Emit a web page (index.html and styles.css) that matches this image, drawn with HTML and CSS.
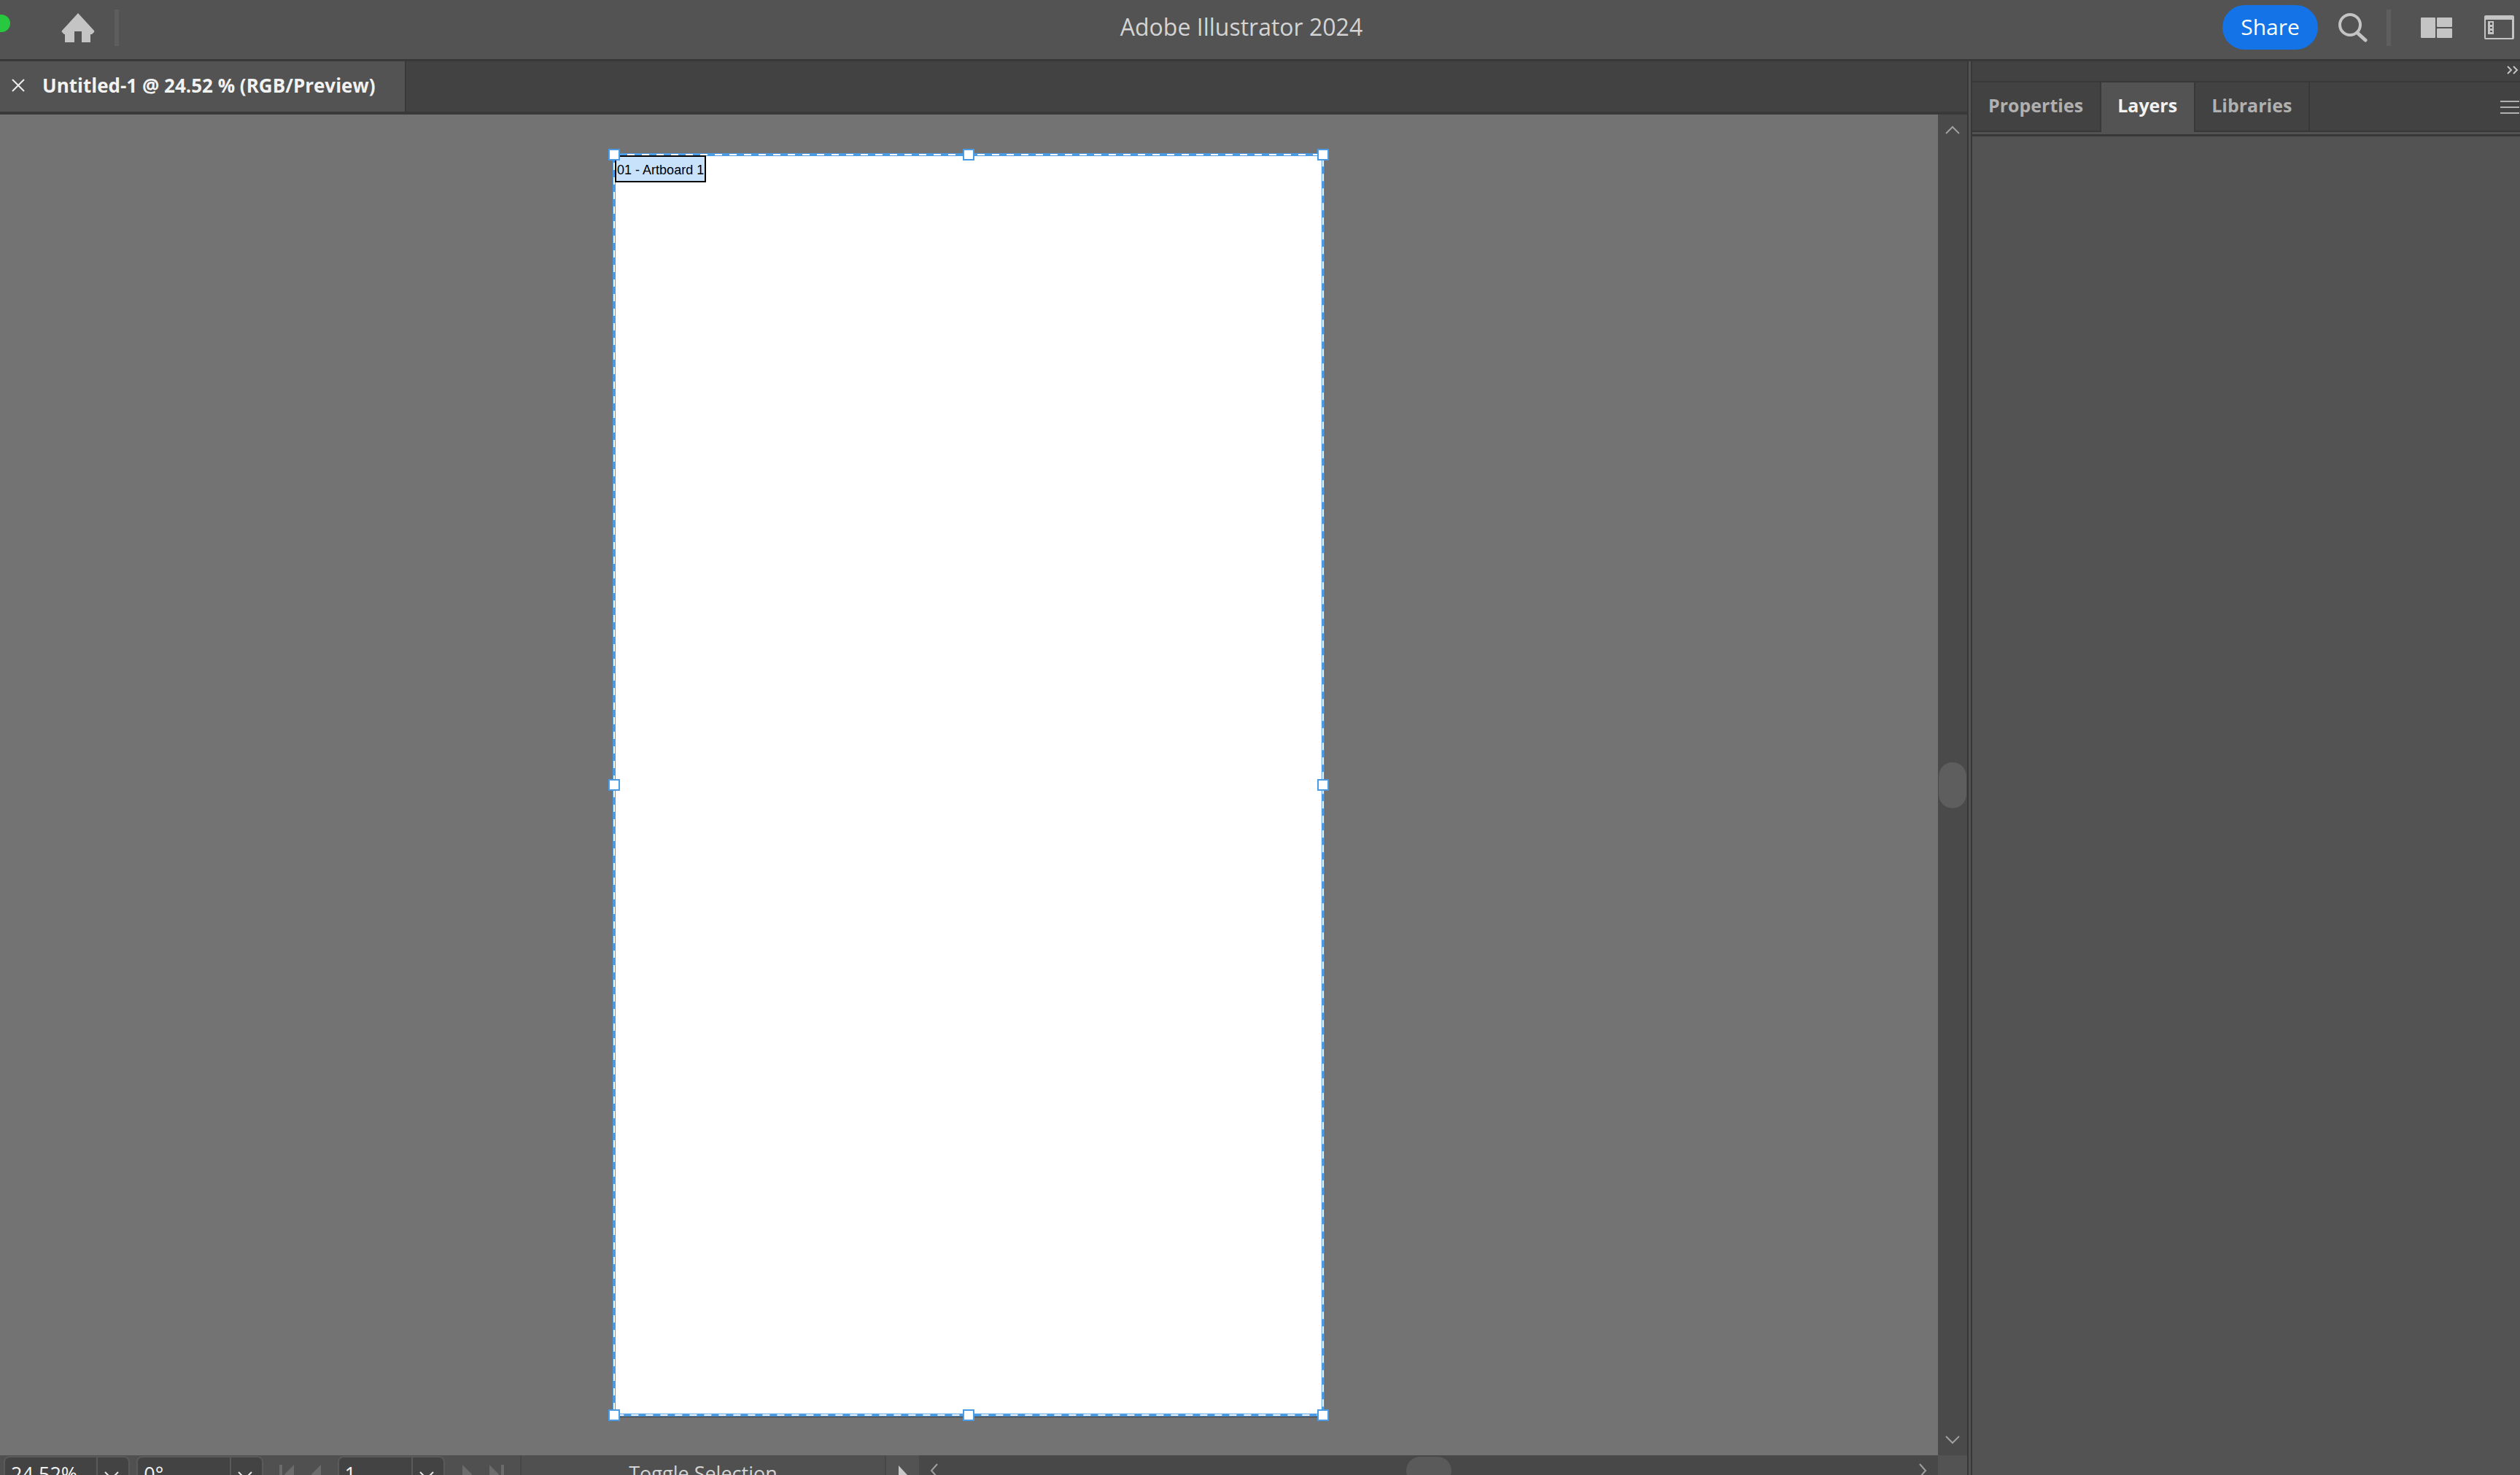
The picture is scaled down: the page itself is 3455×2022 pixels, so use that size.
FILE: index.html
```html
<!DOCTYPE html>
<html lang="en">
<head>
<meta charset="utf-8">
<title>Adobe Illustrator 2024</title>
<link rel="stylesheet" href="styles.css">
</head>
<body>
<div class="app">
  <header class="appbar">
    <div class="appbar-side">
      <span class="window-dot"></span>
      <button class="icon-button home" aria-label="Home">
        <svg width="46" height="40" viewBox="0 0 46 40"><path d="M23 0 45 24q1 2-1 3l-2 2H40V40H28V25H18V40H5V29H4L1 26q-1-1 0-2Z" fill="#c4c4c4"/></svg>
      </button>
      <span class="rule"></span>
    </div>
    <h1 class="app-title">Adobe Illustrator 2024</h1>
    <div class="appbar-side appbar-end">
      <button class="share">Share</button>
      <button class="icon-button search" aria-label="Search">
        <svg width="40" height="40" viewBox="0 0 40 40" fill="none" stroke="#c4c4c4"><circle cx="16" cy="16" r="14" stroke-width="4"/><path d="M26 27 37 37" stroke-width="5" stroke-linecap="round"/></svg>
      </button>
      <span class="rule"></span>
      <button class="icon-button workspace" aria-label="Arrange documents">
        <svg width="43" height="28" viewBox="0 0 43 28" fill="#c4c4c4"><rect width="20" height="28" rx="1"/><rect x="22" width="21" height="13" rx="1"/><rect x="22" y="15" width="21" height="13" rx="1"/></svg>
      </button>
      <button class="icon-button" aria-label="Switch workspace">
        <svg width="42" height="34" viewBox="0 0 42 34" fill="#c4c4c4"><path fill-rule="evenodd" d="M2 0H39q2 0 2 2V31q0 2-2 2H2q-2 0-2-2V2Q0 0 2 0ZM2 6V31H38V6ZM5 8H13V26H5ZM8 10V13H11V10ZM8 16V18H11V16ZM8 21V23H11V21Z"/></svg>
      </button>
    </div>
  </header>

  <div class="workspace-row">
    <main class="document">
      <div class="doc-tabs">
        <div class="doc-tab">
          <button class="icon-button" aria-label="Close document">
            <svg width="18" height="18" viewBox="0 0 18 18" fill="none" stroke="#eee" stroke-width="2"><path d="M1 1 17 17M17 1 1 17"/></svg>
          </button>
          <span>Untitled-1 @ 24.52 % (RGB/Preview)</span>
        </div>
      </div>
      <div class="stage">
        <div class="canvas">
          <div class="artboard">
            <svg class="marquee" width="100%" height="100%" fill="none">
              <rect width="100%" height="100%" stroke="#4b9be4" stroke-width="4"/>
              <rect width="100%" height="100%" stroke="#fff" stroke-width="2" stroke-dasharray="10 10" stroke-dashoffset="2"/>
            </svg>
            <span class="artboard-label">01 - Artboard 1</span>
            <i class="handle top left"></i><i class="handle top center"></i><i class="handle top right"></i>
            <i class="handle middle left"></i><i class="handle middle right"></i>
            <i class="handle bottom left"></i><i class="handle bottom center"></i><i class="handle bottom right"></i>
          </div>
        </div>
        <div class="vscroll">
          <button class="icon-button" aria-label="Scroll up"><svg width="20" height="12" viewBox="0 0 20 12" fill="none" stroke="#a0a0a0" stroke-width="2"><path d="M1 11 10 2 19 11"/></svg></button>
          <span class="vthumb"></span>
          <button class="icon-button" aria-label="Scroll down"><svg width="20" height="12" viewBox="0 0 20 12" fill="none" stroke="#a0a0a0" stroke-width="2"><path d="M1 1 10 10 19 1"/></svg></button>
        </div>
      </div>
      <footer class="statusbar">
        <div class="controls">
          <div class="field">
            <input value="24.52%" aria-label="Zoom">
            <button class="field-arrow" aria-label="Zoom presets"><svg width="20" height="12" viewBox="0 0 20 12"><path d="M1 1 10 10 19 1"/></svg></button>
          </div>
          <div class="field">
            <input value="0°" aria-label="Rotate view">
            <button class="field-arrow" aria-label="Rotation presets"><svg width="20" height="12" viewBox="0 0 20 12"><path d="M1 1 10 10 19 1"/></svg></button>
          </div>
          <div class="steps">
            <button class="icon-button" aria-label="First artboard"><svg width="20" height="26" viewBox="0 0 20 26" fill="#6b6b6b"><path d="M0 0H4V26H0ZM20 0V26L7 13Z"/></svg></button>
            <button class="icon-button" aria-label="Previous artboard"><svg width="14" height="26" viewBox="0 0 14 26" fill="#6b6b6b"><path d="M13 0V26L0 13Z"/></svg></button>
          </div>
          <div class="field page">
            <input value="1" aria-label="Artboard number">
            <button class="field-arrow" aria-label="Artboard list"><svg width="20" height="12" viewBox="0 0 20 12"><path d="M1 1 10 10 19 1"/></svg></button>
          </div>
          <div class="steps">
            <button class="icon-button" aria-label="Next artboard"><svg width="14" height="26" viewBox="0 0 14 26" fill="#6b6b6b"><path d="M1 0 14 13 1 26Z"/></svg></button>
            <button class="icon-button" aria-label="Last artboard"><svg width="20" height="26" viewBox="0 0 20 26" fill="#6b6b6b"><path d="M0 0 13 13 0 26ZM16 0H20V26H16Z"/></svg></button>
          </div>
        </div>
        <div class="status-text">Toggle Selection</div>
        <button class="status-menu" aria-label="Status display"><svg width="14" height="26" viewBox="0 0 14 26" fill="#c8c8c8"><path d="M1 0 13 13 1 26Z"/></svg></button>
        <div class="hscroll">
          <button class="icon-button" aria-label="Scroll left"><svg width="12" height="20" viewBox="0 0 12 20" fill="none" stroke="#a0a0a0" stroke-width="2"><path d="M10 1 2 10 10 19"/></svg></button>
          <span class="hthumb"></span>
          <button class="icon-button" aria-label="Scroll right"><svg width="12" height="20" viewBox="0 0 12 20" fill="none" stroke="#a0a0a0" stroke-width="2"><path d="M2 1 10 10 2 19"/></svg></button>
        </div>
        <span class="corner"></span>
      </footer>
    </main>

    <aside class="panel">
      <div class="panel-top">
        <button class="icon-button" aria-label="Collapse panels"><svg width="16" height="12" viewBox="0 0 16 12" fill="none" stroke="#c4c4c4" stroke-width="2"><path d="M1 1 6 6 1 11M9 1 14 6 9 11"/></svg></button>
      </div>
      <div class="panel-tabs">
        <button class="panel-tab">Properties</button>
        <button class="panel-tab active">Layers</button>
        <button class="panel-tab">Libraries</button>
        <button class="icon-button panel-menu" aria-label="Panel menu"><svg width="26" height="18" viewBox="0 0 26 18" stroke="#b0b0b0" stroke-width="2"><path d="M0 1H26M0 9H26M0 17H26"/></svg></button>
      </div>
      <div class="panel-body"></div>
    </aside>
  </div>
</div>
</body>
</html>
```
FILE: styles.css
```css
* { box-sizing: border-box; }

html, body { height: 100%; }

body {
  margin: 0;
  overflow: hidden;
  background: #535353;
  color: #d4d4d4;
  font-family: "Open Sans", "Noto Sans", sans-serif;
}

button, input {
  margin: 0;
  padding: 0;
  border: 0;
  background: none;
  color: inherit;
  font: inherit;
}

svg { display: block; }

.icon-button { display: flex; flex: none; }

/* The status bar runs 29px past the bottom edge of the window. */
.app {
  display: flex;
  flex-direction: column;
  height: calc(100vh + 29px);
}

/* Application bar */
.appbar {
  display: grid;
  grid-template-columns: 1fr auto 1fr;
  flex: none;
  height: 84px;
  padding: 7px 7px 13px 0;
  border-bottom: 3px solid #383838;
}

.appbar-side { display: flex; align-items: center; }
.appbar-end { justify-content: flex-end; }

.window-dot {
  width: 14px;
  height: 24px;
  margin-bottom: 12px;
  border-radius: 0 12px 12px 0;
  background: #28c840;
}

.home { margin: 0 27px 0 70px; }

.rule { width: 6px; height: 50px; background: #5e5e5e; }

.app-title {
  margin: 0 44px 0 0;
  font-size: 32px;
  font-weight: 500;
  line-height: 60px;
}

.share {
  width: 131px;
  height: 61px;
  margin-right: 28px;
  padding-bottom: 2px;
  border-radius: 31px;
  background: #1473e6;
  color: #fff;
  font-size: 30px;
  font-weight: 500;
}

.search { margin-right: 26px; }
.workspace { margin: 0 44px 0 41px; }

/* Document area */
.workspace-row { display: flex; flex: 1; min-height: 0; }

.document {
  display: flex;
  flex: 1;
  flex-direction: column;
  min-width: 0;
}

.doc-tabs {
  display: flex;
  flex: none;
  height: 73px;
  border-bottom: 4px solid #393939;
  background: #424242;
}

.doc-tab {
  display: flex;
  align-items: center;
  gap: 24px;
  padding: 0 40px 3px 16px;
  border-right: 2px solid #393939;
  background: #535353;
  color: #f2f2f2;
  font-size: 26px;
  font-weight: 700;
}

.stage { display: flex; flex: 1; min-height: 0; }

.canvas {
  display: flex;
  flex: 1;
  align-items: center;
  justify-content: center;
  padding-right: 1px;
  background: #737373;
}

.artboard {
  position: relative;
  height: 94%;
  aspect-ratio: 9 / 16;
  background: #fff;
  box-shadow: 2px 3px 1px #4c4c4c;
}

.marquee { overflow: visible; }

.artboard-label {
  position: absolute;
  top: 1px;
  left: 1px;
  padding: 3px 1px 0;
  border: 2px solid #000;
  background: #c9e2fb;
  color: #000;
  font-family: "Liberation Sans", Arial, sans-serif;
  font-size: 18px;
  line-height: 30px;
}

.handle {
  position: absolute;
  width: 16px;
  height: 16px;
  margin: -8px;
  border: 2px solid #4b9be4;
  background: #fff;
}

.top { top: 0; }
.middle { top: 50%; }
.bottom { top: 100%; }
.left { left: 0; }
.center { left: 50%; }
.right { left: 100%; }

/* Scroll bars */
.vscroll {
  display: flex;
  flex-direction: column;
  align-items: center;
  justify-content: space-between;
  width: 40px;
  padding: 15px 0;
  background: #4a4a4a;
}

.vthumb { width: 38px; height: 63px; border-radius: 19px; background: #5e5e5e; }

.hscroll {
  display: flex;
  flex: 1;
  align-items: center;
  justify-content: space-between;
  padding: 2px 15px 16px;
  background: #484848;
}

.hthumb { width: 62px; height: 38px; border-radius: 19px; background: #5a5a5a; }

.corner { width: 40px; background: #535353; }

/* Status bar */
.statusbar {
  display: flex;
  flex: none;
  height: 56px;
  background: #505050;
  font-size: 27px;
  font-weight: 500;
}

.controls {
  display: flex;
  width: 715px;
  padding: 1px 0 6px 5px;
  border-right: 2px solid #474747;
}

.field {
  display: flex;
  width: 174px;
  margin-right: 9px;
  border: 2px solid #5a5a5a;
  border-radius: 8px;
  background: #434343;
  color: #f2f2f2;
}

.field input { flex: 1; width: 0; padding-left: 8px; }

.field-arrow {
  display: flex;
  align-items: center;
  justify-content: center;
  width: 44px;
  padding: 4px 4px 0 0;
  border-left: 2px solid #5a5a5a;
}

.field-arrow svg { fill: none; stroke: #e6e6e6; stroke-width: 2; }

.page { width: 148px; }

.steps {
  display: flex;
  align-items: center;
  gap: 24px;
  padding: 0 22px 0 13px;
}

.page + .steps { padding-left: 14px; }

.status-text {
  width: 500px;
  border-right: 2px solid #474747;
  line-height: 50px;
  text-align: center;
}

.status-menu {
  display: flex;
  justify-content: center;
  width: 45px;
  padding-top: 14px;
  background: #535353;
}

/* Right-hand panel */
.panel {
  display: flex;
  flex: none;
  flex-direction: column;
  width: 758px;
  border-left: 7px double #383838;
}

.panel-top {
  display: flex;
  align-items: center;
  justify-content: flex-end;
  height: 29px;
  padding: 0 2px 3px 0;
  border-bottom: 2px solid #383838;
  background: #424242;
}

.panel-tabs {
  display: flex;
  height: 71px;
  border-bottom: 3px solid #535353;
  background: linear-gradient(#383838, #383838) bottom / 100% 2px no-repeat padding-box, #424242;
}

.panel-tab {
  padding: 0 23px 6px 22px;
  border-right: 2px solid #383838;
  color: #b0b0b0;
  font-size: 25px;
  font-weight: 700;
}

.panel-tab.active { background: #535353; color: #f2f2f2; }

.panel-menu { align-items: center; margin-left: auto; padding-right: 1px; }

.panel-body { flex: 1; border-top: 3px solid #383838; }
```
